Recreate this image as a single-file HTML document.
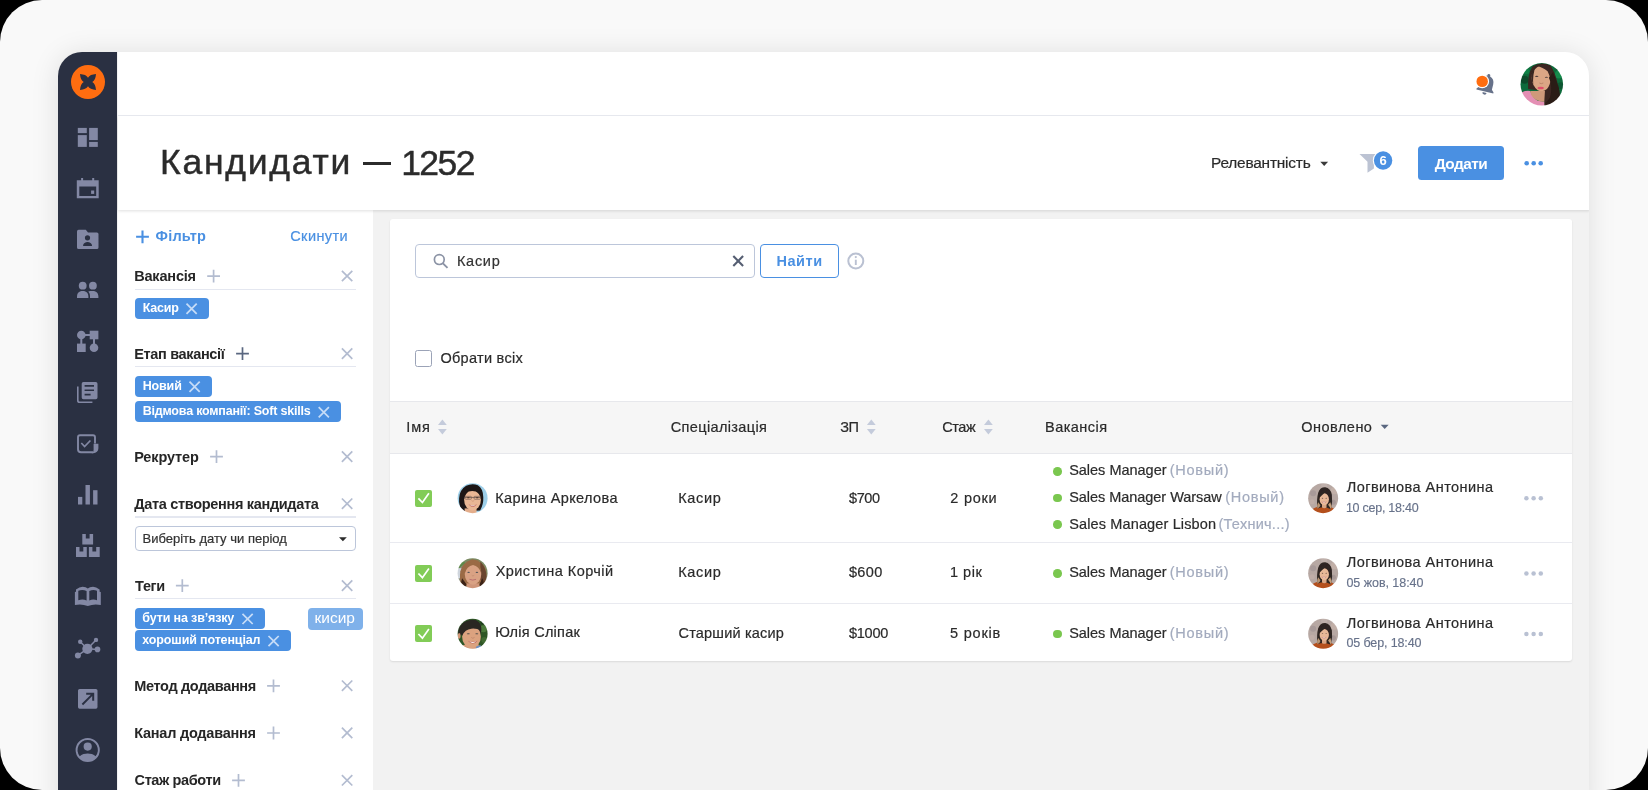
<!DOCTYPE html>
<html lang="uk">
<head>
<meta charset="utf-8">
<title>Кандидати</title>
<style>
*{box-sizing:border-box;margin:0;padding:0}
html,body{width:1648px;height:790px;overflow:hidden;background:#000}
body{font-family:"Liberation Sans",sans-serif;color:#2b2b2b;position:relative}
.outer{position:absolute;left:0;top:0;width:1648px;height:790px;border-radius:42px;background:#f9f9f9;overflow:hidden}
.win{position:absolute;left:58px;top:52px;width:1531px;height:760px;border-radius:24px 24px 0 0;overflow:hidden;background:#f2f2f2;box-shadow:0 2px 28px rgba(0,0,0,.115)}
.pg{position:absolute;left:-58px;top:-52px;width:1648px;height:790px;will-change:transform}
.abs{position:absolute}
.t{position:absolute;white-space:pre;line-height:1}
.side{left:58px;top:52px;width:59.2px;height:740px;background:#2a3042}
.topbar{left:117.5px;top:52px;width:1472px;height:63.5px;background:#fff;border-bottom:1px solid #e6e8ee}
.titlebar{left:117.5px;top:115.5px;width:1472px;height:94.5px;background:#fff;box-shadow:0 1px 3px rgba(0,0,0,.13)}
.fpanel{left:117.5px;top:210px;width:255.5px;height:600px;background:#fff}
.card{left:389.5px;top:218.5px;width:1182.5px;height:442px;background:#fff;border-radius:3px;box-shadow:0 1px 2px rgba(0,0,0,.10);overflow:hidden}
.b{font-weight:700}
.blue{color:#4a90e2}
.lbl{font-size:14.5px;font-weight:700;color:#262626}
.ul{position:absolute;left:134.5px;width:221.5px;height:1.3px;background:#e4e7f0}
.tag{position:absolute;left:134.5px;height:21px;border-radius:4px;background:#4a90e2}
.tag .t{color:#fff;font-size:12.5px;font-weight:700;left:8.6px;top:4.6px}
.th{font-size:14.5px;color:#2b2b2b;-webkit-text-stroke:.2px #2b2b2b}
.td{font-size:14.5px;color:#2b2b2b;-webkit-text-stroke:.2px #2b2b2b}
.gr{color:#a3abbe;-webkit-text-stroke:.2px #a3abbe}
.dt{font-size:12.5px;color:#67728a;-webkit-text-stroke:.15px #67728a}
.dot{position:absolute;width:8.6px;height:8.6px;border-radius:50%;background:#7ac74f;left:1053.2px}
.hl{position:absolute;left:389.5px;width:1182.5px;height:1.3px;background:#e9eaf0}
.cb{position:absolute;left:415px;width:17.3px;height:17.3px;border-radius:2px;background:#82cc57}
svg{position:absolute;overflow:visible}
#title,#titlen{-webkit-text-stroke:.45px #2b2b2b}
#relev,#srch,#obr,#seltx{-webkit-text-stroke:.2px currentColor}
#skin{-webkit-text-stroke:.2px #4a90e2}
</style>
</head>
<body>
<div class="outer">
<div class="win"><div class="pg" id="pg">

<!-- layout blocks -->
<div class="abs fpanel"></div>
<div class="abs card" id="card"></div>
<div class="abs titlebar"></div>
<div class="abs topbar"></div>
<div class="abs side"></div>

<!-- SIDEBAR ICONS -->
<svg class="abs" style="left:0;top:0" width="1648" height="790" viewBox="0 0 1648 790">
<g id="logo" transform="translate(88 82)">
<circle r="17" fill="#ff6d10"/>
<path fill="#2a3042" d="M-8-8Q-2-7.600 0-4.300Q2-7.600 8-8Q7.600-2 4.300 0Q7.600 2 8 8Q2 7.600 0 4.300Q-2 7.600-8 8Q-7.600 2-4.300 0Q-7.600-2-8-8Z"/>
</g>
<g fill="#8388a4" stroke="none">
<!-- dashboard -->
<rect x="77.8" y="127.9" width="9" height="5.2"/><rect x="77.8" y="135.1" width="9" height="11.8"/>
<rect x="89.1" y="127.9" width="8.7" height="12.2"/><rect x="89.1" y="141.9" width="8.7" height="5"/>
<!-- calendar -->
<path fill-rule="evenodd" d="M76.8 180.2h21.9v18h-21.9zM79.3 186.6v9.3h16.9v-9.3z"/>
<rect x="81.1" y="178" width="2" height="3"/><rect x="92.2" y="178" width="2" height="3"/>
<rect x="91.1" y="190.5" width="3.1" height="3.4"/>
<!-- folder shared -->
<path fill-rule="evenodd" d="M78.6 229.8h7.2l2.2 2.6h8.9a1.6 1.6 0 0 1 1.6 1.6v13.4a1.6 1.6 0 0 1-1.6 1.6H78.6a1.6 1.6 0 0 1-1.6-1.6V231.4a1.6 1.6 0 0 1 1.6-1.6zM87.5 235.2a2.6 2.6 0 1 0 0 5.2a2.6 2.6 0 1 0 0-5.2zM83.1 246.1h8.9v-.6c0-2.2-2.4-3.4-4.45-3.4s-4.45 1.2-4.45 3.4z"/>
<!-- people -->
<circle cx="82.7" cy="285.7" r="3.9"/><circle cx="92.9" cy="285.7" r="3.9"/>
<path d="M77 298v-1.6c0-3.6 2.7-5.4 5.7-5.4s5.7 1.8 5.7 5.4v1.6z"/>
<path d="M90 298v-1.6c0-2.2-.6-3.7-1.7-4.8c1.2-.5 2.7-.6 4.4-.6c3 0 5.7 1.8 5.7 5.4v1.6z"/>
<!-- flow -->
<circle cx="81.3" cy="335" r="4.3"/><rect x="89.7" y="330.7" width="8.7" height="8.6"/>
<rect x="77" y="343.6" width="8.7" height="8.4"/><circle cx="94" cy="347.8" r="4.3"/>
<rect x="81" y="334" width="12" height="2"/><rect x="80.3" y="336" width="2" height="9"/><rect x="93" y="338" width="2" height="7"/>
<!-- library -->
<path fill-rule="evenodd" d="M83.4 382h12.4a1.7 1.7 0 0 1 1.7 1.7v13.8a1.7 1.7 0 0 1-1.7 1.7H83.4a1.7 1.7 0 0 1-1.7-1.7V383.7a1.7 1.7 0 0 1 1.7-1.7zM84.6 385.1v1.7h9.4v-1.7zM84.6 389.4v1.7h9.4v-1.7zM84.6 393.7v1.7h6v-1.7z"/>
<path d="M77 386.6h1.6v13.6a1.2 1.2 0 0 0 1.2 1.2h12.6v1.6H79.6a2.6 2.6 0 0 1-2.6-2.6z"/>
<!-- bars -->
<rect x="78" y="496.9" width="4.3" height="7.6"/><rect x="85.5" y="485" width="4.4" height="19.5"/><rect x="93.1" y="490.2" width="4.4" height="14.3"/>
<!-- boxes -->
<path d="M82.3 534h3.5v4.6h3.8V534h3.5v10.4H82.3z"/>
<path d="M76 546.9h3.5v4.6h3.8v-4.6h3.5v10.2H76z"/>
<path d="M88.9 546.9h3.5v4.6h3.8v-4.6h3.5v10.2H88.9z"/>
<!-- network -->
<circle cx="87.4" cy="648.8" r="5.1"/><circle cx="80.2" cy="641.8" r="2.2"/><circle cx="96" cy="639.9" r="2.2"/><circle cx="97.5" cy="649.4" r="2.8"/><circle cx="77.9" cy="655.4" r="3"/>
<!-- ext link -->
<path fill-rule="evenodd" d="M79.6 689h16.3a1.6 1.6 0 0 1 1.6 1.6v16.5a1.6 1.6 0 0 1-1.6 1.6H79.6a1.6 1.6 0 0 1-1.6-1.6V690.600a1.6 1.600 0 0 1 1.6-1.6zM86.200 692.700v2h4.600l-9.100 9.100l1.400 1.400l9.100-9.100v4.600h2v-8z"/>
<!-- user -->
<path fill-rule="evenodd" d="M87.700 737.900a12.100 12.100 0 1 0 0 24.200a12.100 12.100 0 1 0 0-24.200zM87.700 739.900a10.100 10.100 0 0 1 7.900 16.400c-1.700-2.100-5.500-2.800-7.900-2.800s-6.200.7-7.900 2.800a10.100 10.100 0 0 1 7.900-16.400zM87.700 742.500a4.100 4.100 0 1 0 0 8.200a4.100 4.100 0 1 0 0-8.200z"/>
</g>
<g fill="none" stroke="#8388a4">
<!-- task -->
<path stroke-width="1.9" d="M95 443.500V437.300a2 2 0 0 0-2-2H80a2 2 0 0 0-2 2V449.200a3 3 0 0 0 3 3H93"/>
<path stroke-width="1.700" d="M81.300 443l3.300 3.500l5.800-6"/>
<path fill="#8388a4" stroke="none" d="M93.600 443.800h4.800v4.400a5 5 0 0 1-5 5H91.500c1.500-.5 2.100-2 2.100-3.500z"/>
<!-- book -->
<path fill="#8388a4" stroke="none" fill-rule="evenodd" d="M74.900 592l1.100-.3v-2.200Q79.500 586.700 82.600 586.700Q86 586.900 87.800 588.600Q89.600 586.900 93 586.700Q96.100 586.700 99.600 589.500v2.200l1.200.3V605Q94 603.400 87.800 606.100Q81.600 603.400 74.900 605ZM78.300 590.700Q82.500 589.300 86.600 590.900V600.400Q82.500 598.900 78.300 600.300ZM89.300 590.900Q93.200 589.300 97 590.700V600.300Q93.200 598.900 89.300 600.400Z"/>
<!-- network lines -->
<path stroke-width="1.500" d="M87.400 648.800L80.200 641.800M87.400 648.800L96 639.900M87.400 648.800L97.500 649.400M87.400 648.800L77.900 655.400"/>
</g>
</svg>


<!-- TOPBAR -->
<svg class="abs" style="left:0;top:0" width="1648" height="790" viewBox="0 0 1648 790">
<defs>
<clipPath id="cpU"><circle cx="1541.5" cy="84.100" r="21.500"/></clipPath>
<radialGradient id="gFace" cx="50%" cy="40%" r="60%"><stop offset="0" stop-color="#e9bfa0"/><stop offset="1" stop-color="#c99573"/></radialGradient>
</defs>
<!-- bell -->
<g transform="translate(1486.400 85.200) rotate(14)" fill="#67728a">
<path d="M0-11.500a1.500 1.500 0 0 1 1.500 1.500v.700c3.200.800 4.900 3.600 4.900 6.900v5.400l2.300 2.400v1.100H-8.700v-1.100l2.300-2.400v-5.400c0-3.300 1.700-6.100 4.900-6.900v-.700a1.500 1.500 0 0 1 1.500-1.500z"/>
<path d="M-2.100 7.600h4.200a2.100 2.100 0 0 1-4.200 0z"/>
</g>
<circle cx="1482.200" cy="81.400" r="6.900" fill="#fff"/>
<circle cx="1482.200" cy="81.400" r="5.700" fill="#ff6d10"/>
</svg>

<!-- TITLEBAR -->
<div class="t" id="title" style="left:159.95px;top:145.46px;font-size:35.5px;color:#2b2b2b;letter-spacing:1.77px">Кандидати</div><div class="abs" style="left:362.900px;top:161.900px;width:28.100px;height:3.400px;background:#2b2b2b"></div><div class="t" id="titlen" style="left:401.19px;top:145.56px;font-size:35.5px;color:#2b2b2b;letter-spacing:-1.57px">1252</div>
<div class="t" id="relev" style="left:1211.01px;top:155.47px;font-size:15.400px;letter-spacing:-0.19px;color:#2b2b2b">Релевантність</div>
<svg class="abs" style="left:0;top:0" width="1648" height="790" viewBox="0 0 1648 790">
<path d="M1320.300 161.800h7.800l-3.900 4.200z" fill="#3a3a3a"/>
<path d="M1359.500 153.900h17l-2.600 3v11.600l-6.400 4.200v-10.900z" fill="#bcc3d3"/>
<circle cx="1383.100" cy="160.500" r="10.300" fill="#fff"/><circle cx="1383.100" cy="160.500" r="9.200" fill="#4a90e2"/>
<circle cx="1526.700" cy="163.200" r="2.300" fill="#4a90e2"/><circle cx="1533.700" cy="163.200" r="2.300" fill="#4a90e2"/><circle cx="1540.700" cy="163.200" r="2.300" fill="#4a90e2"/>
</svg>
<div class="t b" id="six" style="left:1379.500px;top:154.150px;font-size:13px;color:#fff">6</div>
<div class="abs" style="left:1417.700px;top:146px;width:86.100px;height:34.200px;border-radius:3.500px;background:#4a90e2"></div>
<div class="t b" id="dodaty" style="left:1434.63px;top:155.57px;font-size:15.400px;letter-spacing:-0.51px;color:#fff">Додати</div>


<!-- FILTER PANEL -->
<div class="t b blue" id="filtr" style="left:155.51px;top:229.33px;font-size:14.500px;letter-spacing:0.25px">Фільтр</div>
<div class="t blue" id="skin" style="left:290.22px;top:229.33px;font-size:14.500px;letter-spacing:0.43px">Скинути</div>
<div class="t lbl" id="lb0" style="left:134.18px;top:268.54px;letter-spacing:-0.18px">Вакансія</div><div class="t lbl" id="lb1" style="left:134.18px;top:346.54px;letter-spacing:-0.33px">Етап вакансії</div><div class="t lbl" id="lb2" style="left:134.18px;top:449.54px;letter-spacing:-0.14px">Рекрутер</div><div class="t lbl" id="lb3" style="left:134.31px;top:496.73px;letter-spacing:-0.32px">Дата створення кандидата</div><div class="t lbl" id="lb4" style="left:135.12px;top:578.54px;letter-spacing:-0.35px">Теги</div><div class="t lbl" id="lb5" style="left:134.18px;top:678.73px;letter-spacing:-0.33px">Метод додавання</div><div class="t lbl" id="lb6" style="left:134.18px;top:725.93px;letter-spacing:-0.23px">Канал додавання</div><div class="t lbl" id="lb7" style="left:134.56px;top:773.13px;letter-spacing:-0.38px">Стаж работи</div>
<div class="ul" style="top:288.7px"></div><div class="ul" style="top:365.6px"></div><div class="ul" style="top:516.3px"></div><div class="ul" style="top:598.2px"></div>
<div class="tag" style="top:298px;width:74.3px"><div class="t" id="tg0" style="left:8.17px;top:4.22px;letter-spacing:-0.17px">Касир</div></div><div class="tag" style="top:376px;width:77.3px"><div class="t" id="tg1" style="left:8.17px;top:4.03px;letter-spacing:-0.14px">Новий</div></div><div class="tag" style="top:401.4px;width:206.5px"><div class="t" id="tg2" style="left:8.17px;top:4.04px;letter-spacing:-0.20px">Відмова компанії: Soft skills</div></div><div class="tag" style="top:608.1px;width:130.3px"><div class="t" id="tg3" style="left:7.78px;top:4.33px;letter-spacing:-0.14px">бути на зв’язку</div></div><div class="tag" style="top:630.3px;width:156.3px"><div class="t" id="tg4" style="left:7.86px;top:4.13px;letter-spacing:-0.14px">хороший потенціал</div></div>
<div class="abs" style="left:134.500px;top:526.300px;width:221px;height:25.200px;border:1.200px solid #bcc6da;border-radius:4px;background:#fff"></div>
<div class="t" id="seltx" style="left:142.46px;top:531.71px;font-size:13px;letter-spacing:0.01px;color:#333">Виберіть дату чи період</div>
<div class="abs" style="left:308px;top:608.200px;width:54.700px;height:21.800px;border-radius:4px;background:#7fb1ea"></div>
<div class="t" id="kysyr" style="left:314.5px;top:610.29px;font-size:15.5px;color:#fff;letter-spacing:0px">кисир</div>
<svg class="abs" style="left:0;top:0" width="1648" height="790" viewBox="0 0 1648 790"><path d="M136.1 236.8h12.8M142.5 230.4v12.8" stroke="#4a90e2" stroke-width="2.1" fill="none"/><path d="M207.2 276.1h12.8M213.6 269.70000000000005v12.8" stroke="#b3bcd0" stroke-width="1.7" fill="none"/><path d="M341.90000000000003 270.8l10.4 10.4M352.3 270.8l-10.4 10.4" stroke="#b3bcd0" stroke-width="1.7" fill="none"/><path d="M236.1 353.7h12.8M242.5 347.3v12.8" stroke="#5a6780" stroke-width="1.7" fill="none"/><path d="M341.90000000000003 348.4l10.4 10.4M352.3 348.4l-10.4 10.4" stroke="#b3bcd0" stroke-width="1.7" fill="none"/><path d="M210.1 456.7h12.8M216.5 450.3v12.8" stroke="#b3bcd0" stroke-width="1.7" fill="none"/><path d="M341.90000000000003 451.4l10.4 10.4M352.3 451.4l-10.4 10.4" stroke="#b3bcd0" stroke-width="1.7" fill="none"/><path d="M341.90000000000003 498.5l10.4 10.4M352.3 498.5l-10.4 10.4" stroke="#b3bcd0" stroke-width="1.7" fill="none"/><path d="M175.9 585.7h12.8M182.3 579.3000000000001v12.8" stroke="#b3bcd0" stroke-width="1.7" fill="none"/><path d="M341.90000000000003 580.4l10.4 10.4M352.3 580.4l-10.4 10.4" stroke="#b3bcd0" stroke-width="1.7" fill="none"/><path d="M267.1 685.8h12.8M273.5 679.4v12.8" stroke="#b3bcd0" stroke-width="1.7" fill="none"/><path d="M341.90000000000003 680.4999999999999l10.4 10.4M352.3 680.4999999999999l-10.4 10.4" stroke="#b3bcd0" stroke-width="1.7" fill="none"/><path d="M267.1 733h12.8M273.5 726.6v12.8" stroke="#b3bcd0" stroke-width="1.7" fill="none"/><path d="M341.90000000000003 727.6999999999999l10.4 10.4M352.3 727.6999999999999l-10.4 10.4" stroke="#b3bcd0" stroke-width="1.7" fill="none"/><path d="M232.1 780.4h12.8M238.5 774.0v12.8" stroke="#b3bcd0" stroke-width="1.7" fill="none"/><path d="M341.90000000000003 775.0999999999999l10.4 10.4M352.3 775.0999999999999l-10.4 10.4" stroke="#b3bcd0" stroke-width="1.7" fill="none"/><path d="M186.5 303.7l10.2 10.2M196.7 303.7l-10.2 10.2" stroke="#c6dcf7" stroke-width="1.750" fill="none"/><path d="M189.5 381.7l10.2 10.2M199.7 381.7l-10.2 10.2" stroke="#c6dcf7" stroke-width="1.750" fill="none"/><path d="M318.7 407.1l10.2 10.2M328.9 407.1l-10.2 10.2" stroke="#c6dcf7" stroke-width="1.750" fill="none"/><path d="M242.5 613.8l10.2 10.2M252.7 613.8l-10.2 10.2" stroke="#c6dcf7" stroke-width="1.750" fill="none"/><path d="M268.5 636.0l10.2 10.2M278.7 636.0l-10.2 10.2" stroke="#c6dcf7" stroke-width="1.750" fill="none"/><path d="M339 537.200h7.800l-3.900 4.100z" fill="#2b2b2b"/></svg>

<!-- MAIN CARD -->
<div class="abs" style="left:415px;top:243.800px;width:340.200px;height:34.200px;border:1.200px solid #bcc6da;border-radius:4px;background:#fff"></div>
<div class="t" id="srch" style="left:456.94px;top:254.24px;font-size:14.500px;letter-spacing:0.72px;color:#333">Касир</div>
<div class="abs" style="left:760.200px;top:243.800px;width:78.600px;height:34.200px;border:1.200px solid #4a90e2;border-radius:4px;background:#fff"></div>
<div class="t b blue" id="nayty" style="left:776.38px;top:254.24px;font-size:14.500px;letter-spacing:0.56px">Найти</div>
<div class="abs" style="left:415.300px;top:349.900px;width:16.800px;height:16.700px;border:1.900px solid #9ba3b7;border-radius:2.500px;background:#fff"></div>
<div class="t" id="obr" style="left:440.40px;top:350.54px;font-size:14.500px;letter-spacing:0.29px;color:#2b2b2b">Обрати всіх</div>
<div class="abs" style="left:389.500px;top:401.400px;width:1182.500px;height:52.200px;background:#f6f6f6;border-top:1.200px solid #e7e8ec;border-bottom:1.200px solid #e7e8ec"></div>
<div class="t th" id="th0" style="left:406.36px;top:419.93px;letter-spacing:0.88px">Імя</div>
<div class="t th" id="th1" style="left:670.72px;top:419.93px;letter-spacing:0.37px">Спеціалізація</div>
<div class="t th" id="th2" style="left:840.36px;top:419.93px;letter-spacing:-0.65px">ЗП</div>
<div class="t th" id="th3" style="left:942.22px;top:419.93px;letter-spacing:-0.43px">Стаж</div>
<div class="t th" id="th4" style="left:1045.03px;top:419.93px;letter-spacing:0.46px">Вакансія</div>
<div class="t th" id="th5" style="left:1301.33px;top:419.93px;letter-spacing:0.47px">Оновлено</div>
<div class="hl" style="top:541.800px"></div><div class="hl" style="top:602.600px"></div>
<div class="cb" style="top:489.7px"></div>
<div class="t td" id="nm0" style="left:495.24px;top:490.73px;letter-spacing:0.38px">Карина Аркелова</div>
<div class="t td" id="sp0" style="left:678.24px;top:490.73px;letter-spacing:0.68px">Касир</div>
<div class="t td" id="zp0" style="left:848.94px;top:490.73px;letter-spacing:-0.36px">$700</div>
<div class="t td" id="st0" style="left:950.37px;top:490.73px;letter-spacing:0.74px">2 роки</div>
<div class="t td" id="lg0" style="left:1346.72px;top:480.34px;letter-spacing:0.45px">Логвинова Антонина</div>
<div class="t dt" id="dt0" style="left:1345.90px;top:502.32px;letter-spacing:-0.25px">10 сер, 18:40</div>
<div class="cb" style="top:564.6px"></div>
<div class="t td" id="nm1" style="left:495.66px;top:564.04px;letter-spacing:0.46px">Христина Корчій</div>
<div class="t td" id="sp1" style="left:678.24px;top:565.34px;letter-spacing:0.68px">Касир</div>
<div class="t td" id="zp1" style="left:848.94px;top:565.34px;letter-spacing:0.36px">$600</div>
<div class="t td" id="st1" style="left:949.96px;top:565.34px;letter-spacing:0.52px">1 рік</div>
<div class="t td" id="lg1" style="left:1346.72px;top:554.73px;letter-spacing:0.45px">Логвинова Антонина</div>
<div class="t dt" id="dt1" style="left:1346.40px;top:577.12px;letter-spacing:-0.04px">05 жов, 18:40</div>
<div class="cb" style="top:625.1px"></div>
<div class="t td" id="nm2" style="left:495.24px;top:624.73px;letter-spacing:0.27px">Юлія Сліпак</div>
<div class="t td" id="sp2" style="left:678.52px;top:625.93px;letter-spacing:0.18px">Старший касир</div>
<div class="t td" id="zp2" style="left:848.94px;top:625.93px;letter-spacing:-0.24px">$1000</div>
<div class="t td" id="st2" style="left:950.12px;top:625.93px;letter-spacing:0.78px">5 років</div>
<div class="t td" id="lg2" style="left:1346.72px;top:615.53px;letter-spacing:0.45px">Логвинова Антонина</div>
<div class="t dt" id="dt2" style="left:1346.40px;top:637.43px;letter-spacing:-0.12px">05 бер, 18:40</div>
<div class="dot" style="top:467.1px"></div>
<div class="t td" id="vc0" style="left:1069.15px;top:463.24px;letter-spacing:-0.01px">Sales Manager</div>
<div class="t td gr" id="vg0" style="left:1169.77px;top:463.24px;letter-spacing:0.73px">(Новый)</div>
<div class="dot" style="top:493.6px"></div>
<div class="t td" id="vc1" style="left:1069.15px;top:490.04px;letter-spacing:-0.04px">Sales Manager Warsaw</div>
<div class="t td gr" id="vg1" style="left:1225.23px;top:490.04px;letter-spacing:0.73px">(Новый)</div>
<div class="dot" style="top:520.1px"></div>
<div class="t td" id="vc2" style="left:1069.15px;top:516.54px;letter-spacing:0.14px">Sales Manager Lisbon</div>
<div class="t td gr" id="vg2" style="left:1218.46px;top:516.54px;letter-spacing:0.27px">(Технич...)</div>
<div class="dot" style="top:569.2px"></div>
<div class="t td" id="vc3" style="left:1069.15px;top:565.34px;letter-spacing:-0.01px">Sales Manager</div>
<div class="t td gr" id="vg3" style="left:1169.77px;top:565.34px;letter-spacing:0.73px">(Новый)</div>
<div class="dot" style="top:629.7px"></div>
<div class="t td" id="vc4" style="left:1069.15px;top:625.93px;letter-spacing:-0.01px">Sales Manager</div>
<div class="t td gr" id="vg4" style="left:1169.77px;top:625.93px;letter-spacing:0.73px">(Новый)</div>
<svg class="abs" style="left:0;top:0" width="1648" height="790" viewBox="0 0 1648 790"><circle cx="439.300" cy="259.600" r="4.900" stroke="#8b93a5" stroke-width="1.700" fill="none"/><path d="M442.900 263.300l4.600 4.600" stroke="#8b93a5" stroke-width="1.900" fill="none"/><path d="M733.3000000000001 256.1l9.8 9.8M743.1 256.1l-9.8 9.8" stroke="#555e72" stroke-width="2.1" fill="none"/><circle cx="855.800" cy="261" r="7.500" stroke="#bac1d2" stroke-width="2" fill="none"/><path d="M855.800 259.700v5.300" stroke="#bac1d2" stroke-width="1.900"/><circle cx="855.800" cy="257.100" r="1.100" fill="#bac1d2"/><path d="M438 425.0h8.800l-4.400-5.400z" fill="#c4cbdb"/><path d="M438 429.0h8.800l-4.400 5.400z" fill="#c4cbdb"/><path d="M866.9 425.0h8.800l-4.400-5.400z" fill="#c4cbdb"/><path d="M866.9 429.0h8.800l-4.400 5.400z" fill="#c4cbdb"/><path d="M984 425.0h8.800l-4.400-5.400z" fill="#c4cbdb"/><path d="M984 429.0h8.800l-4.400 5.400z" fill="#c4cbdb"/><path d="M1380.700 424.800h8l-4 4.300z" fill="#5a6780"/><path d="M418.4 498.3l4 4.200l6.500-9.300" stroke="#fff" stroke-width="1.700" fill="none"/><circle cx="1526.3999999999999" cy="498.2" r="2.250" fill="#b9c1d3"/><circle cx="1533.6" cy="498.2" r="2.250" fill="#b9c1d3"/><circle cx="1540.8" cy="498.2" r="2.250" fill="#b9c1d3"/><path d="M418.4 573.5l4 4.200l6.500-9.300" stroke="#fff" stroke-width="1.700" fill="none"/><circle cx="1526.3999999999999" cy="573.4000000000001" r="2.250" fill="#b9c1d3"/><circle cx="1533.6" cy="573.4000000000001" r="2.250" fill="#b9c1d3"/><circle cx="1540.8" cy="573.4000000000001" r="2.250" fill="#b9c1d3"/><path d="M418.4 634.0l4 4.200l6.500-9.300" stroke="#fff" stroke-width="1.700" fill="none"/><circle cx="1526.3999999999999" cy="633.9000000000001" r="2.250" fill="#b9c1d3"/><circle cx="1533.6" cy="633.9000000000001" r="2.250" fill="#b9c1d3"/><circle cx="1540.8" cy="633.9000000000001" r="2.250" fill="#b9c1d3"/></svg>


<svg class="abs" style="left:0;top:0" width="0" height="0">
<defs>
<filter id="bl" x="-5%" y="-5%" width="110%" height="110%"><feGaussianBlur stdDeviation="9"/></filter>
<filter id="bl2" x="-5%" y="-5%" width="110%" height="110%"><feGaussianBlur stdDeviation="14"/></filter>
<clipPath id="cU"><circle cx="392" cy="400" r="323"/></clipPath>
<clipPath id="cA"><circle cx="407" cy="399" r="296"/></clipPath>
<clipPath id="cL"><circle cx="398" cy="399" r="296"/></clipPath>
<!-- Логвинова -->
<symbol id="avL" viewBox="0 0 790 790">
<g clip-path="url(#cL)"><g filter="url(#bl)">
<rect width="790" height="790" fill="#b7a8a3"/>
<circle cx="200" cy="300" r="60" fill="#a89a99"/><circle cx="620" cy="250" r="70" fill="#c2b0a8"/><circle cx="600" cy="480" r="50" fill="#a79896"/><circle cx="180" cy="470" r="50" fill="#c0aea8"/><circle cx="420" cy="150" r="60" fill="#bfb0ab"/>
<path d="M150 650Q200 590 310 565L520 565Q610 590 650 650L650 760L150 760Z" fill="#b4501f"/>
<path d="M285 600Q265 420 300 290Q340 180 440 185Q540 200 570 330Q590 470 550 615Q470 580 420 580Q350 580 285 600Z" fill="#2f2521"/>
<path d="M282 605Q268 530 300 480L345 540Q335 590 282 605Z" fill="#b89472"/>
<path d="M552 618Q525 565 495 530L540 480Q572 545 552 618Z" fill="#c6a07a"/>
<path d="M375 500h90v85Q420 610 375 585Z" fill="#d9a584"/>
<ellipse cx="420" cy="420" rx="92" ry="118" fill="#e8b898"/>
<path d="M318 340Q350 215 480 228Q430 300 328 385Z" fill="#2f2521"/>
<path d="M478 228Q545 280 532 410Q505 330 468 280Z" fill="#2f2521"/>
<path d="M362 458Q415 480 468 458Q415 530 362 458Z" fill="#b9605a"/>
<path d="M375 465Q415 482 455 465Q415 508 375 465Z" fill="#fff"/>
<ellipse cx="385" cy="398" rx="15" ry="7" fill="#3a2a26"/><ellipse cx="458" cy="398" rx="15" ry="7" fill="#3a2a26"/>
</g></g>
</symbol>
<!-- Карина -->
<symbol id="avK" viewBox="0 0 790 790">
<g clip-path="url(#cA)"><g filter="url(#bl)">
<rect width="790" height="790" fill="#9dcfe9"/>
<path d="M225 660Q125 560 140 400Q150 235 280 155Q400 95 510 145Q615 210 618 380Q625 520 555 640Z" fill="#1e1715"/>
<path d="M250 600h235v120h-235z" fill="#e3ad8b"/>
<ellipse cx="405" cy="432" rx="166" ry="208" fill="#e9b795"/>
<path d="M236 420Q225 250 330 205Q400 185 470 205Q580 250 576 420Q545 300 470 266Q400 248 330 266Q268 300 236 420Z" fill="#1e1715"/>
<rect x="238" y="374" width="336" height="14" fill="#5b4a43"/>
<rect x="258" y="362" width="125" height="58" rx="14" fill="none" stroke="#6b5a52" stroke-width="12"/>
<rect x="437" y="362" width="125" height="58" rx="14" fill="none" stroke="#6b5a52" stroke-width="12"/>
<ellipse cx="322" cy="390" rx="24" ry="10" fill="#3b2a24"/><ellipse cx="498" cy="390" rx="24" ry="10" fill="#3b2a24"/>
<path d="M325 520Q410 560 495 520Q410 625 325 520Z" fill="#c0685e"/>
<path d="M345 530Q410 555 475 530Q410 585 345 530Z" fill="#fbf4ef"/>
<path d="M385 445Q410 475 440 445" stroke="#cb9475" stroke-width="14" fill="none"/>
</g></g>
</symbol>
<!-- Христина -->
<symbol id="avH" viewBox="0 0 790 790">
<g clip-path="url(#cA)"><g filter="url(#bl)">
<rect width="790" height="790" fill="#8d8f7c"/>
<path d="M100 330L420 90L100 90Z" fill="#5d8848"/>
<rect x="100" y="300" width="120" height="200" fill="#cfd5dd"/>
<path d="M100 90h700v350h-160z" fill="#7a8a62"/>
<path d="M190 650Q140 520 165 360Q200 190 400 125Q600 150 670 330Q710 500 610 650Z" fill="#9a6a45"/>
<path d="M560 170Q680 300 680 460Q660 600 600 650L560 500Z" fill="#6a452f"/>
<path d="M190 650Q170 560 200 500L290 620L250 690Z" fill="#3a2418"/>
<path d="M610 650Q640 580 600 500L540 620L560 690Z" fill="#3a2418"/>
<path d="M290 600h250v120h-250z" fill="#cf967a"/>
<ellipse cx="415" cy="415" rx="163" ry="212" fill="#d9a284"/>
<path d="M250 410Q245 210 415 180Q575 205 582 410Q535 255 415 236Q290 255 250 410Z" fill="#9a6a45"/>
<ellipse cx="328" cy="382" rx="26" ry="11" fill="#4a5058"/><ellipse cx="492" cy="382" rx="26" ry="11" fill="#4a5058"/>
<path d="M345 520Q410 550 475 520" stroke="#b4646a" stroke-width="16" fill="none"/>
<path d="M390 440Q412 470 440 440" stroke="#c08a6e" stroke-width="14" fill="none"/>
</g></g>
</symbol>
<!-- Юлія -->
<symbol id="avY" viewBox="0 0 790 790">
<g clip-path="url(#cA)"><g filter="url(#bl)">
<rect width="790" height="790" fill="#2f5627"/>
<circle cx="620" cy="300" r="70" fill="#4c7a3a"/><circle cx="640" cy="520" r="60" fill="#3f6a30"/><circle cx="600" cy="180" r="40" fill="#1f3d1a"/>
<path d="M120 460Q110 280 220 180Q340 100 480 130Q590 190 580 330L560 420L180 420Z" fill="#2b2624"/>
<ellipse cx="142" cy="440" rx="28" ry="55" fill="#d39877"/>
<path d="M220 620L520 600L560 720L230 720Z" fill="#d39877"/>
<path d="M470 650L560 620L600 720L480 720Z" fill="#6f8fc0"/>
<ellipse cx="385" cy="455" rx="185" ry="228" fill="#dba27f"/>
<path d="M195 440Q180 240 330 200Q490 190 575 340Q480 285 380 298Q260 310 195 440Z" fill="#2b2624"/>
<ellipse cx="322" cy="398" rx="30" ry="11" fill="#4a4a48"/><ellipse cx="490" cy="398" rx="30" ry="11" fill="#4a4a48"/>
<path d="M315 535Q410 575 505 535Q410 650 315 535Z" fill="#b9605a"/>
<path d="M338 548Q410 575 482 548Q410 610 338 548Z" fill="#fbf4ef"/>
<path d="M380 470Q410 505 445 470" stroke="#c0876a" stroke-width="16" fill="none"/>
</g></g>
</symbol>
<!-- top-right user -->
<symbol id="avU" viewBox="0 0 790 790">
<g clip-path="url(#cU)"><g filter="url(#bl)">
<rect width="790" height="790" fill="#0c6a3a"/>
<circle cx="130" cy="330" r="60" fill="#084a2a"/><circle cx="650" cy="250" r="60" fill="#138a4b"/><circle cx="680" cy="420" r="50" fill="#0a5630"/><circle cx="160" cy="200" r="45" fill="#118044"/><circle cx="640" cy="140" r="40" fill="#06381f"/>
<path d="M185 470Q170 250 250 130Q380 50 520 110Q600 220 640 420Q690 560 640 720L430 720L420 500Z" fill="#3a2620"/>
<path d="M90 520Q150 490 215 500Q260 610 330 650L430 665L430 760L90 760Z" fill="#e48fb4"/>
<path d="M215 500Q225 560 260 600Q320 660 430 665L440 500Z" fill="#cf997a"/>
<path d="M235 300Q240 160 380 110Q500 120 525 300Q530 400 470 470Q400 530 330 490Q250 430 235 300Z" fill="#dba685"/>
<path d="M235 330Q215 200 300 120Q250 250 262 400Z" fill="#3a2620"/>
<path d="M300 120Q420 60 540 140Q600 300 560 480Q530 300 480 200Q400 130 300 120Z" fill="#3a2620"/>
<path d="M500 300Q560 420 520 600L440 700L640 720Q690 560 640 420Q600 300 560 220Z" fill="#2a1a16"/>
<ellipse cx="375" cy="455" rx="48" ry="20" fill="#e0506a"/>
<ellipse cx="315" cy="278" rx="26" ry="9" fill="#4a3a3a"/><ellipse cx="462" cy="292" rx="24" ry="9" fill="#4a3a3a"/>
<path d="M355 380Q385 400 415 380" stroke="#b98465" stroke-width="14" fill="none"/>
</g></g>
</symbol>
</defs>
</svg>

<svg class="abs" style="left:0;top:0" width="1648" height="790" viewBox="0 0 1648 790">
<use href="#avU" x="1516" y="58" width="52" height="52"/>
<use href="#avK" x="452" y="478" width="40" height="40"/>
<use href="#avH" x="452" y="553" width="40" height="40"/>
<use href="#avY" x="452" y="613.600" width="40" height="40"/>
<use href="#avL" x="1303" y="478" width="40" height="40"/>
<use href="#avL" x="1303" y="553" width="40" height="40"/>
<use href="#avL" x="1303" y="613.600" width="40" height="40"/>
</svg>

</div></div>
</div>
</body>
</html>
